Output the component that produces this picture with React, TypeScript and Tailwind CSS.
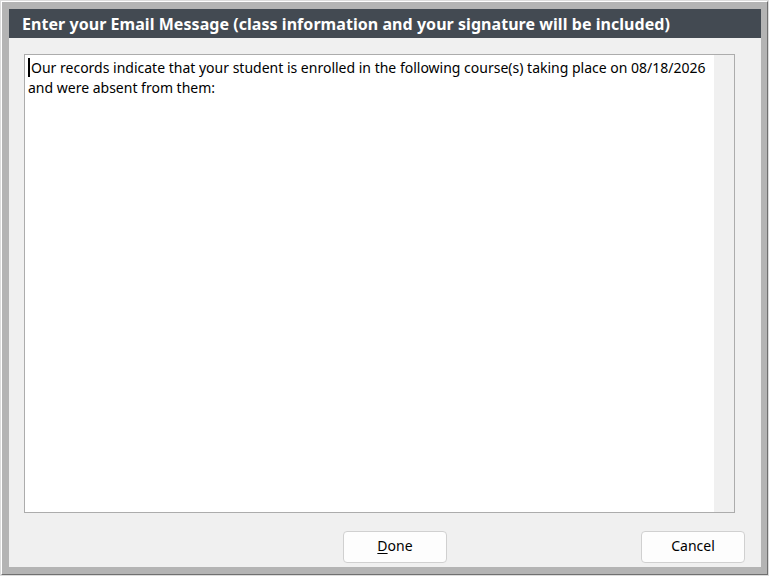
import React from 'react';

const App = () => {
  return (
    <div className="w-[769px] h-[576px] border border-[#dcdcdc] bg-white font-['Noto_Sans',sans-serif]">
      <div className="w-full h-full border border-t-white border-l-white border-r-[#707070] border-b-[#707070] bg-[#b4b4b4] pl-[7px] pt-[7px] pr-[6px] pb-[7px]">
        <div className="w-full h-full flex flex-col bg-[#f0f0f0]">
          {/* Title bar */}
          <div className="h-[29px] shrink-0 bg-[#434a52] flex items-center pl-[13px]">
            <h1 className="text-white font-bold text-[16px] tracking-[0.05px] leading-none">
              Enter your Email Message (class information and your signature will be included)
            </h1>
          </div>

          {/* Message box */}
          <div className="mt-[16px] ml-[15px] w-[711px] h-[459px] border border-[#acacac] bg-white flex">
            <div className="flex-1 pl-[3px] pt-[3px] text-[14px] leading-[20px] text-black">
              <span className="inline-block w-[2px] h-[19px] bg-black align-[-4px] mr-[1px]"></span>
              Our records indicate that your student is enrolled in the following course(s) taking place on 08/18/2026 and were absent from them:
            </div>
            <div className="w-[20px] shrink-0 bg-[#f0f0f0]"></div>
          </div>

          {/* Buttons */}
          <div className="mt-[18px] flex justify-end gap-[194px] pr-[16px]">
            <button className="w-[104px] h-[32px] pb-[3px] rounded-[4px] border border-[#d0d0d0] bg-[#fdfdfd] text-[14px] text-black">
              <span className="underline underline-offset-2">D</span>one
            </button>
            <button className="w-[104px] h-[32px] pb-[3px] rounded-[4px] border border-[#d0d0d0] bg-[#fdfdfd] text-[14px] text-black">
              Cancel
            </button>
          </div>
        </div>
      </div>
    </div>
  );
};

export default App;
